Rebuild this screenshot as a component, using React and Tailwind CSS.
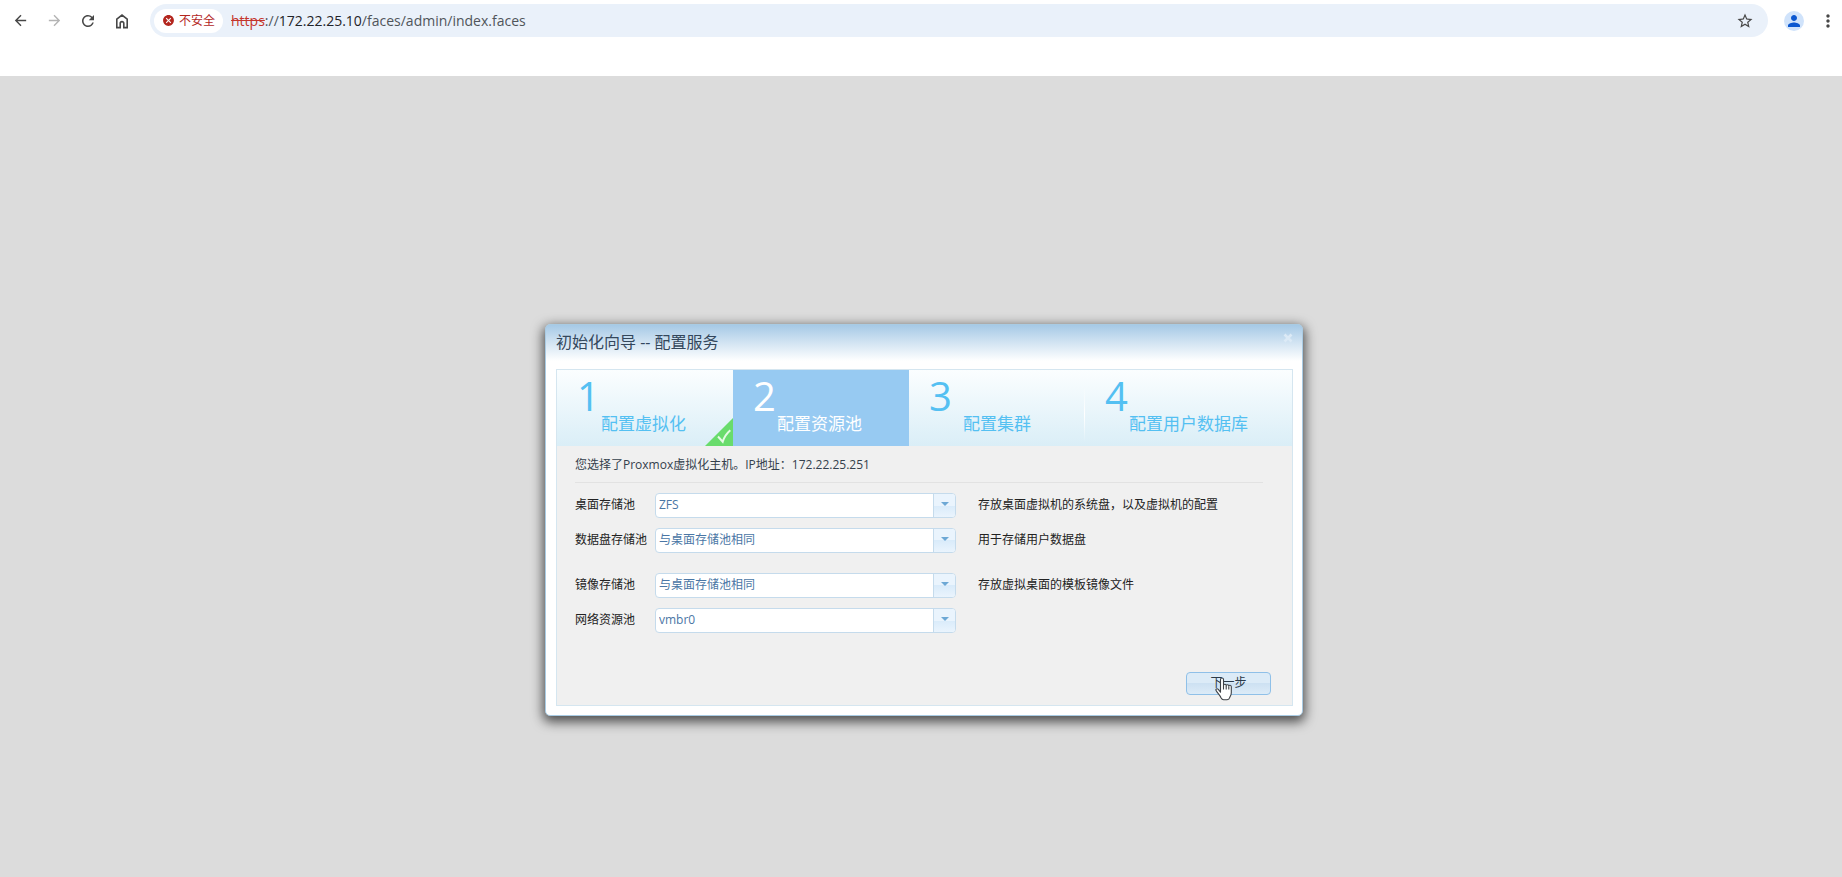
import { useState } from "react";
import {
  MdArrowBack,
  MdArrowForward,
  MdCancel,
  MdMoreVert,
  MdPerson,
  MdRefresh,
  MdStarOutline,
} from "react-icons/md";

const STEPS = [
  { number: 1, title: "配置虚拟化", done: true },
  { number: 2, title: "配置资源池", active: true },
  { number: 3, title: "配置集群" },
  { number: 4, title: "配置用户数据库" },
];

const SAME_AS_DESKTOP = "与桌面存储池相同";

const FIELDS = [
  {
    id: "desktop",
    label: "桌面存储池",
    options: ["ZFS"],
    hint: "存放桌面虚拟机的系统盘，以及虚拟机的配置",
  },
  {
    id: "data",
    label: "数据盘存储池",
    options: [SAME_AS_DESKTOP, "ZFS"],
    hint: "用于存储用户数据盘",
  },
  {
    id: "image",
    label: "镜像存储池",
    options: [SAME_AS_DESKTOP, "ZFS"],
    hint: "存放虚拟桌面的模板镜像文件",
    spaced: true,
  },
  { id: "network", label: "网络资源池", options: ["vmbr0"], hint: "" },
];

function HomeIcon() {
  return (
    <svg className="h-5 w-5" viewBox="0 0 20 20" fill="none" stroke="currentColor" strokeWidth="1.6">
      <path d="M4.8 8.2 10 4.1l5.2 4.1v8.4h-3.4v-4.2a1.8 1.8 0 0 0-3.6 0v4.2H4.8z" />
    </svg>
  );
}

// Barra del navegador
function BrowserBar() {
  return (
    <header className="flex h-[76px] shrink-0 items-start bg-white pt-1 pr-1 pl-[10px] text-[#474747]">
      <nav className="flex h-[33px] items-center gap-[14px]" aria-label="浏览器">
        <button type="button" aria-label="后退" className="flex h-5 w-5 items-center justify-center">
          <MdArrowBack size={17} />
        </button>
        <button type="button" aria-label="前进" disabled className="flex h-5 w-5 items-center justify-center text-[#b4b4b4]">
          <MdArrowForward size={17} />
        </button>
        <button type="button" aria-label="刷新" className="flex h-5 w-5 items-center justify-center">
          <MdRefresh size={18} />
        </button>
        <button type="button" aria-label="主页" className="flex h-5 w-5 items-center justify-center">
          <HomeIcon />
        </button>
      </nav>

      <div className="ml-[18px] flex h-[33px] min-w-0 flex-1 items-center rounded-full bg-[#eaf1fa] pr-[14px] pl-1">
        <button
          type="button"
          className="flex h-6 shrink-0 items-center gap-1 rounded-full bg-white pr-2 pl-2 text-xs text-[#b3261e]"
        >
          <MdCancel size={13} />
          不安全
        </button>
        <p className="flex-1 truncate pl-2 text-sm text-[#50555b]">
          <span className="text-[#c5352c] line-through">https</span>
          ://<span className="text-[#1f2328]">172.22.25.10</span>
          /faces/admin/index.faces
        </p>
        <button type="button" aria-label="收藏">
          <MdStarOutline size={18} />
        </button>
      </div>

      <div className="flex h-[33px] items-center gap-[14px] pl-4">
        <button
          type="button"
          aria-label="用户"
          className="flex h-5 w-5 items-center justify-center rounded-full bg-[#d0e3fb] text-[#0b57d0]"
        >
          <MdPerson size={18} />
        </button>
        <button type="button" aria-label="更多">
          <MdMoreVert size={20} />
        </button>
      </div>
    </header>
  );
}

function DoneMark() {
  return (
    <svg className="absolute right-0 bottom-0 h-7 w-7" viewBox="0 0 28 28">
      <path d="M28 0v28H0z" fill="#69dc6c" />
      <path d="m13 18.500 4.700 5.200c1.400-4.600 4-8.400 7.600-11.500" fill="none" stroke="#e4fbe4" strokeWidth="2" />
    </svg>
  );
}

function Step({ step }) {
  const last = step.number === STEPS.length;

  return (
    <li
      aria-current={step.active ? "step" : undefined}
      className={`relative h-[76px] pt-2 pl-5 ${last ? "flex-1" : "w-44"} ${
        step.active ? "bg-[#97caf2] text-white" : "text-[#54c0f2]"
      }`}
    >
      <div className="text-[40px] leading-9">{step.number}</div>
      <div className={`text-[17px] leading-5 ${step.number === 3 ? "pl-[34px]" : "pl-6"}`}>
        {step.title}
      </div>
      {step.done && <DoneMark />}
      {step.number === 3 && (
        <span className="absolute top-4 right-0 h-14 w-px bg-gradient-to-b from-transparent via-white to-transparent" />
      )}
    </li>
  );
}

function PoolField({ field, value, onChange }) {
  return (
    <div className={`flex h-[25px] items-center ${field.spaced ? "mt-5" : "mt-[10px]"}`}>
      <label htmlFor={field.id} className="w-20 shrink-0 whitespace-nowrap">
        {field.label}
      </label>
      <div className="relative h-[25px] w-[301px] shrink-0">
        <select
          id={field.id}
          value={value}
          onChange={(e) => onChange(field.id, e.target.value)}
          className="h-full w-full appearance-none rounded border border-[#c5dbec] bg-white pr-6 pl-[3px] text-[#4a76a5]"
        >
          {field.options.map((option) => (
            <option key={option}>{option}</option>
          ))}
        </select>
        <span className="pointer-events-none absolute top-px right-px bottom-px flex w-[22px] justify-center rounded-r-[3px] border-l border-[#c5dbec] bg-[linear-gradient(#eaf4fd_50%,#d9ebfa_50%,#eaf4fd)] pt-2">
          <svg className="h-1 w-2" viewBox="0 0 8 4">
            <path d="M0 0h8L4 4z" fill="#6da8d5" />
          </svg>
        </span>
      </div>
      <span className="pl-[22px]">{field.hint}</span>
    </div>
  );
}

// Cursor de mano sobre el botón
function HandCursor() {
  return (
    <svg className="pointer-events-none absolute top-1 left-7 h-6 w-[18px]" viewBox="0 0 18 24">
      <path
        d="M5.500 15.200V2.600C5.500.4 8.500.4 8.500 2.600V8.500c0-1.600 2.700-1.600 2.700.2 0-1.500 2.600-1.300 2.600.4 0-1.300 2.500-1.100 2.500.6v6c0 2.600-1.100 3.400-1.600 4.800-.3 1.500-1.200 2.200-2.600 2.200H8.600c-1.500 0-2-.8-2.600-2C4.900 18.200 2.800 16.500 1.200 13.800.2 12.100 2 11.100 3.300 12.300z"
        fill="#fff"
        stroke="#3c4045"
        strokeWidth="1.1"
        strokeLinejoin="round"
      />
      <path d="M8.500 8.500v4M11.200 9v3.500M13.800 9.500v3" stroke="#3c4045" strokeWidth="1.100" />
    </svg>
  );
}

function App() {
  const [values, setValues] = useState({
    desktop: "ZFS",
    data: SAME_AS_DESKTOP,
    image: SAME_AS_DESKTOP,
    network: "vmbr0",
  });

  const handleChange = (id, value) => {
    setValues({ ...values, [id]: value });
  };

  return (
    <div className="flex min-h-screen flex-col bg-[#dcdcdc] font-['Open_Sans','Noto_Sans_CJK_SC',sans-serif]">
      <BrowserBar />

      <main className="flex flex-1 flex-col items-center justify-center pt-[86px] pl-1.5">
        <section
          role="dialog"
          aria-labelledby="wizard-title"
          className="w-full max-w-[758px] rounded-[5px] border border-[#a9cbe3] bg-white bg-[linear-gradient(#a6c9e6,#fff_36px)] pr-[9px] pb-[9px] pl-[10px] shadow-[0_4px_12px_2px_rgba(0,0,0,0.65)]"
        >
          {/* Título */}
          <div className="flex h-11 items-start justify-between">
            <h1 id="wizard-title" className="pt-[7px] text-base leading-5 text-[#33475c]">
              初始化向导 -- 配置服务
            </h1>
            <button type="button" aria-label="关闭" className="-mr-1 pt-2 pr-1 text-[#dceaf6]">
              <svg className="h-[10px] w-[10px]" viewBox="0 0 10 10" stroke="currentColor" strokeWidth="2.600">
                <path d="m1.500 1.500 7 7M8.500 1.500l-7 7" />
              </svg>
            </button>
          </div>

          <div className="border border-[#d5e6f0] bg-[#f0f0f0]">
            <ol className="flex bg-gradient-to-b from-[#fbfeff] to-[#daeef7]">
              {STEPS.map((step) => (
                <Step key={step.number} step={step} />
              ))}
            </ol>

            <form
              className="pr-[21px] pb-[10px] pl-[18px] text-xs text-[#222]"
              onSubmit={(e) => e.preventDefault()}
            >
              <p className="mr-2 border-b border-[#e2e2e2] pt-[10px] pb-2 leading-[18px] text-[#34404c]">
                您选择了Proxmox虚拟化主机。IP地址：172.22.25.251
              </p>

              {FIELDS.map((field) => (
                <PoolField key={field.id} field={field} value={values[field.id]} onChange={handleChange} />
              ))}

              <div className="mt-[39px] flex justify-end">
                <button
                  type="submit"
                  className="relative h-[23px] w-[85px] rounded border border-[#8fc0e8] bg-[linear-gradient(#dcebf7_50%,#cde1f2_50%,#dcebf7)] text-[#2b3a49]"
                >
                  下一步
                  <HandCursor />
                </button>
              </div>
            </form>
          </div>
        </section>
      </main>
    </div>
  );
}

export default App;
